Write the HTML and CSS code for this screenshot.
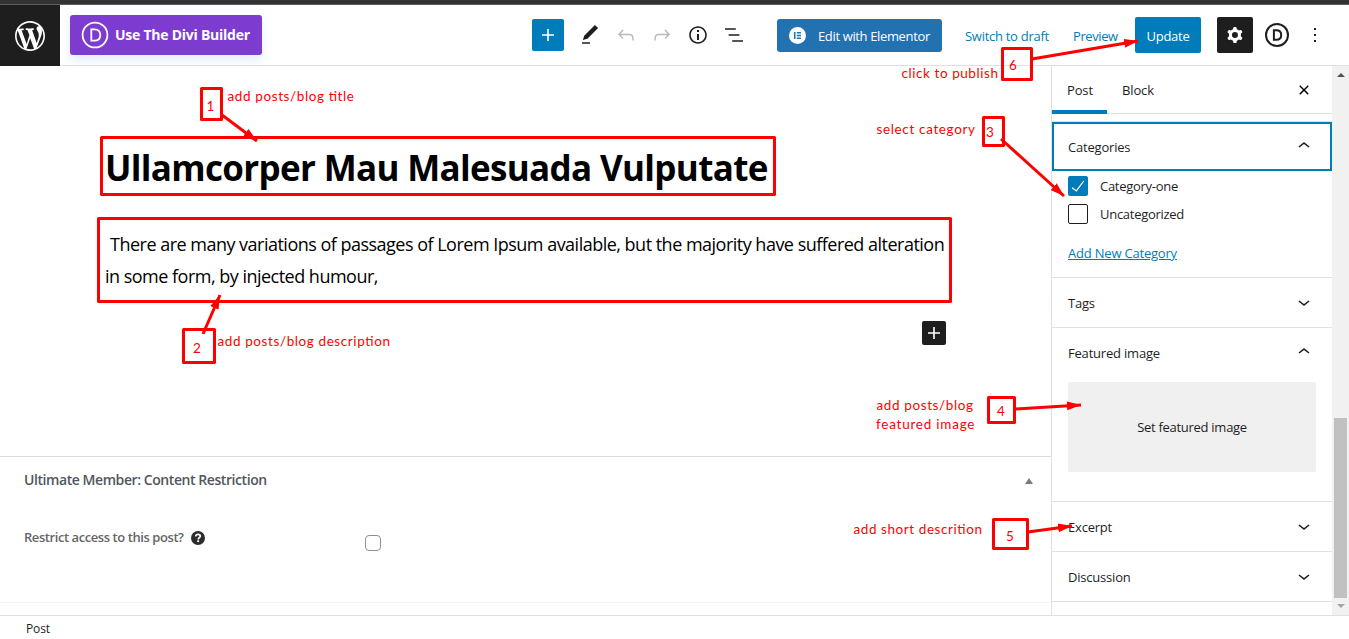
FILE: index.html
```html
<!DOCTYPE html>
<html lang="en">
<head>
<meta charset="utf-8">
<title>Edit Post</title>
<link rel="stylesheet" href="styles.css">
</head>
<body>
<div class="editor">
  <div class="admin-strip"></div>
  <header class="header">
    <a class="wp-logo"><svg width="36" height="36" viewBox="-2 -2 24 24"><path d="M20 10c0-5.51-4.49-10-10-10C4.48 0 0 4.49 0 10c0 5.52 4.48 10 10 10 5.51 0 10-4.48 10-10zM7.78 15.37L4.37 6.22c.55-.02 1.17-.08 1.17-.08.5-.06.44-1.13-.06-1.11 0 0-1.45.11-2.37.11-.18 0-.37 0-.58-.01C4.12 2.69 6.87 1.11 10 1.11c2.33 0 4.45.87 6.05 2.34-.68-.11-1.65.39-1.65 1.58 0 .74.45 1.36.9 2.1.35.61.55 1.36.55 2.46 0 1.49-1.4 5-1.4 5l-3.03-8.37c.54-.02.82-.17.82-.17.5-.05.44-1.25-.06-1.22 0 0-1.44.12-2.38.12-.87 0-2.33-.12-2.33-.12-.5-.03-.56 1.2-.06 1.22l.92.08 1.26 3.41zM17.41 10c.24-.64.74-1.87.43-4.25.7 1.29 1.05 2.71 1.05 4.25 0 3.29-1.73 6.24-4.4 7.78.97-2.59 1.94-5.2 2.92-7.78zM6.1 18.09C3.12 16.65 1.11 13.53 1.11 10c0-1.3.23-2.48.72-3.59C3.25 10.3 4.67 14.2 6.1 18.09zm4.03-6.63l2.58 6.98c-.86.29-1.76.45-2.71.45-.79 0-1.57-.11-2.29-.33.81-2.38 1.62-4.74 2.42-7.1z"/></svg></a>
    <button class="divi-button">
      <svg width="28" height="28" viewBox="0 0 28 28"><circle cx="14" cy="14" r="12.4"/><path d="M10.3 8.3h3.2c3.6 0 5.8 2.1 5.8 5.7s-2.2 5.7-5.8 5.7h-3.2z"/></svg>
      <span>Use The Divi Builder</span>
    </button>
    <div class="tools">
      <button class="inserter"><svg width="24" height="24" viewBox="0 0 24 24"><path d="M18 11.2h-5.2V6h-1.6v5.2H6v1.6h5.2V18h1.6v-5.2H18z"/></svg></button>
      <button class="tool"><svg width="24" height="24" viewBox="0 0 24 24"><path d="M20.1 5.1L16.9 2 6.2 12.7l-1.3 4.4 4.5-1.3L20.1 5.1zM4 20.8h8v-1.5H4v1.5z"/></svg></button>
      <button class="tool disabled"><svg width="24" height="24" viewBox="0 0 24 24"><path d="M18.3 11.7c-.6-.6-1.4-.9-2.3-.9H6.7l2.9-3.3-1.1-1-4.5 5L8.5 16l1-1-2.7-2.7H16c.5 0 .9.2 1.3.5 1 1 1 3.4 1 4.5v.3h1.5v-.2c0-1.5 0-4.3-1.5-5.7z"/></svg></button>
      <button class="tool disabled"><svg width="24" height="24" viewBox="0 0 24 24"><path d="M15.6 6.5l-1.1 1 2.9 3.3H8c-.9 0-1.7.3-2.3.9-1.4 1.5-1.4 4.2-1.4 5.6v.2h1.5v-.3c0-1.1 0-3.5 1-4.5.3-.3.7-.5 1.3-.5h9.2L14.5 15l1.1 1.1 4.6-4.6-4.6-5z"/></svg></button>
      <button class="tool"><svg width="24" height="24" viewBox="0 0 24 24"><path d="M12 3.2c-4.8 0-8.8 3.9-8.8 8.8 0 4.8 3.9 8.8 8.8 8.8 4.8 0 8.8-3.9 8.8-8.8 0-4.8-4-8.8-8.8-8.8zm0 16c-4 0-7.2-3.3-7.2-7.2C4.8 8 8 4.8 12 4.8s7.2 3.3 7.2 7.2c0 4-3.2 7.2-7.2 7.2zM11 17h2v-6h-2v6zm0-8h2V7h-2v2z"/></svg></button>
      <button class="tool"><svg width="24" height="24" viewBox="0 0 24 24"><path d="M13.8 5.2H3v1.5h10.8V5.2zm-3.6 12v1.5H21v-1.5H10.2zm7.2-6H6.6v1.5h10.8v-1.5z"/></svg></button>
    </div>
    <button class="elementor-button">
      <svg width="17" height="17" viewBox="0 0 17 17"><circle cx="8.500" cy="8.500" r="8.500" fill="#fff"/><path d="M5 5h1.500v7H5zM7.800 5H12v1.400H7.800zM7.800 7.800H12v1.400H7.800zM7.800 10.600H12V12H7.800z" fill="#2271b1"/></svg>
      <span>Edit with Elementor</span>
    </button>
    <div class="actions">
      <a class="link draft">Switch to draft</a>
      <a class="link preview">Preview</a>
      <button class="update">Update</button>
      <button class="settings"><svg width="24" height="24" viewBox="0 0 24 24"><path fill-rule="evenodd" d="M10.289 4.836A1 1 0 0 1 11.275 4h1.306a1 1 0 0 1 .987.836l.244 1.466c.787.26 1.503.679 2.108 1.218l1.393-.522a1 1 0 0 1 1.216.437l.653 1.130a1 1 0 0 1-.23 1.273l-1.148.944a6.025 6.025 0 0 1 0 2.435l1.149.946a1 1 0 0 1 .23 1.272l-.653 1.130a1 1 0 0 1-1.216.437l-1.394-.522c-.605.54-1.320.958-2.108 1.218l-.244 1.466a1 1 0 0 1-.987.836h-1.306a1 1 0 0 1-.986-.836l-.244-1.466a5.995 5.995 0 0 1-2.108-1.218l-1.394.522a1 1 0 0 1-1.217-.436l-.653-1.131a1 1 0 0 1 .23-1.272l1.149-.946a6.026 6.026 0 0 1 0-2.435l-1.148-.944a1 1 0 0 1-.23-1.272l.653-1.131a1 1 0 0 1 1.217-.437l1.393.522a5.994 5.994 0 0 1 2.108-1.218l.244-1.466zM14.929 12a3 3 0 1 1-6 0 3 3 0 0 1 6 0z"/></svg></button>
      <button class="divi-round"><svg width="24" height="24" viewBox="0 0 24 24"><circle cx="12" cy="12" r="11"/><path d="M8.900 7.200h2.500c3 0 4.800 1.800 4.800 4.800s-1.800 4.800-4.800 4.800H8.900z"/></svg></button>
      <button class="more"><svg width="24" height="24" viewBox="0 0 24 24"><path d="M13 19h-2v-2h2v2zm0-6h-2v-2h2v2zm0-6h-2V5h2v2z"/></svg></button>
    </div>
  </header>
  <div class="body">
    <main class="content">
      <section class="canvas">
        <h1 class="post-title">Ullamcorper Mau Malesuada Vulputate</h1>
        <p class="post-text"><span class="line first">There are many variations of passages of Lorem Ipsum available, but the majority have suffered alteration</span><span class="line">in some form, by injected humour,</span></p>
        <button class="appender"><svg width="24" height="24" viewBox="0 0 24 24"><path d="M18 11.2h-5.2V6h-1.6v5.2H6v1.6h5.2V18h1.6v-5.2H18z"/></svg></button>
      </section>
      <section class="metabox">
        <div class="metabox-head"><h2>Ultimate Member: Content Restriction</h2><span class="toggle"></span></div>
        <div class="metabox-row">
          <label>Restrict access to this post?</label>
          <svg class="help" width="14" height="14" viewBox="0 0 14 14"><circle cx="7" cy="7" r="7" fill="#2c2c2c"/><path d="M4.700 5.500C4.700 4 5.700 3.300 7 3.300s2.300.7 2.300 1.900C9.300 6.600 7.200 6.800 7.200 8.500" fill="none" stroke="#fff" stroke-width="1.700"/><path d="M6.200 9.300h1.900v1.800H6.200z" fill="#fff"/></svg>
          <span class="restrict-box"></span>
        </div>
      </section>
    </main>
    <aside class="sidebar">
      <div class="panels">
        <nav class="tabs"><span class="tab active">Post</span><span class="tab">Block</span><svg class="close" width="24" height="24" viewBox="0 0 24 24"><path d="M12 13.060l3.712 3.713 1.061-1.060L13.061 12l3.712-3.712-1.060-1.060L12 10.938 8.288 7.227l-1.061 1.060L10.939 12l-3.712 3.712 1.060 1.061L12 13.061z"/></svg></nav>
        <div class="panel categories">
          <div class="panel-head focused"><span>Categories</span><svg class="chev" width="24" height="24" viewBox="0 0 24 24"><path d="M6.500 12.400L12 8l5.500 4.400-.9 1.200L12 10l-4.500 3.600-1-1.200z"/></svg></div>
          <div class="check"><span class="box checked"><svg width="20" height="20" viewBox="0 0 24 24"><path d="M18.300 5.600L9.900 16.900l-4.600-3.400-.9 1.200 5.800 4.300 9.300-12.600z"/></svg></span><span>Category-one</span></div>
          <div class="check"><span class="box"></span><span>Uncategorized</span></div>
          <a class="add-new">Add New Category</a>
        </div>
        <div class="panel"><div class="panel-head"><span>Tags</span><svg class="chev" width="24" height="24" viewBox="0 0 24 24"><path d="M17.500 11.600L12 16l-5.500-4.400.9-1.200L12 14l4.500-3.600 1 1.200z"/></svg></div></div>
        <div class="panel featured"><div class="panel-head"><span>Featured image</span><svg class="chev" width="24" height="24" viewBox="0 0 24 24"><path d="M6.500 12.400L12 8l5.500 4.400-.9 1.200L12 10l-4.500 3.600-1-1.200z"/></svg></div>
          <button class="set-image">Set featured image</button></div>
        <div class="panel"><div class="panel-head"><span>Excerpt</span><svg class="chev" width="24" height="24" viewBox="0 0 24 24"><path d="M17.500 11.600L12 16l-5.500-4.400.9-1.200L12 14l4.500-3.600 1 1.200z"/></svg></div></div>
        <div class="panel"><div class="panel-head"><span>Discussion</span><svg class="chev" width="24" height="24" viewBox="0 0 24 24"><path d="M17.500 11.600L12 16l-5.500-4.400.9-1.200L12 14l4.500-3.600 1 1.200z"/></svg></div></div>
      </div>
      <div class="scrollbar"><span class="arrow-up"></span><span class="thumb"></span><span class="arrow-down"></span></div>
    </aside>
  </div>
  <footer class="footer">Post</footer>
</div>

<svg class="annotations" width="1349" height="639" viewBox="0 0 1349 639">
  <defs>
    <marker id="head" markerUnits="userSpaceOnUse" markerWidth="15" markerHeight="10" refX="14" refY="4.500" orient="auto"><path d="M0 0L14 4.500L0 9z" fill="#f00"/></marker>
  </defs>
  <g class="frames">
    <rect x="201.500" y="88.500" width="20" height="31"/>
    <rect x="101.500" y="137.500" width="673" height="57"/>
    <rect x="98.500" y="218.500" width="852" height="83"/>
    <rect x="183.500" y="329.500" width="31" height="33"/>
    <rect x="983.500" y="117.500" width="20" height="28"/>
    <rect x="1002.500" y="48.500" width="29" height="31"/>
    <rect x="988.500" y="397.500" width="26" height="25"/>
    <rect x="993.500" y="519.500" width="34" height="29"/>
  </g>
  <g class="arrows">
    <path d="M222 115L257 141"/>
    <path d="M203 334L220 295"/>
    <path d="M1001 139L1064 196"/>
    <path d="M1032 59L1138 41"/>
    <path d="M1015 409L1081 405"/>
    <path d="M1028 532L1072 526"/>
  </g>
  <g class="notes">
    <text x="227.500" y="101" textLength="126.500">add posts/blog title</text>
    <text x="217.500" y="346" textLength="172.500">add posts/blog description</text>
    <text x="876.500" y="134" textLength="98.500">select category</text>
    <text x="901.500" y="78" textLength="96.500">click to publish</text>
    <text x="876.500" y="410" textLength="96.500">add posts/blog</text>
    <text x="876" y="429" textLength="98.500">featured image</text>
    <text x="853.500" y="534" textLength="128.500">add short descrition</text>
    <text x="206.500" y="111">1</text>
    <text x="193" y="353">2</text>
    <text x="986" y="137">3</text>
    <text x="997" y="416">4</text>
    <text x="1006" y="541">5</text>
    <text x="1009" y="70">6</text>
  </g>
</svg>
</body>
</html>
```
FILE: styles.css
```css
* { box-sizing: border-box; }
body {
  margin: 0;
  width: 1349px;
  height: 639px;
  overflow: hidden;
  position: relative;
  background: #fff;
  color: #1e1e1e;
  font: 13px/18px "Open Sans", "Noto Sans", sans-serif;
  letter-spacing: -0.28px;
}
button { border: 0; padding: 0; margin: 0; background: none; font: inherit; letter-spacing: inherit; color: inherit; }
svg { display: block; flex: none; }
.editor { display: flex; flex-direction: column; height: 639px; }
.admin-strip { height: 5px; background: #333; border-bottom: 1px solid #5c5c5c; }

.header { display: flex; align-items: center; height: 61px; border-bottom: 1px solid #e0e0e0; white-space: nowrap; }
.wp-logo { width: 60px; height: 61px; margin-bottom: -1px; background: #1e1e1e; fill: #fff; display: flex; align-items: center; justify-content: center; }
.divi-button { width: 192px; height: 40px; margin-left: 10px; padding-left: 11px; display: flex; align-items: center; gap: 6px; background: #7e3bd0; border-radius: 3px; color: #fff; font-weight: 700; font-size: 14px; box-shadow: 0 5px 10px rgba(43, 135, 218, .14); letter-spacing: -0.25px; }
.divi-button svg { fill: none; stroke: #fff; stroke-width: 1.8; }
.tools { display: flex; align-items: center; margin-left: 270px; }
.inserter { width: 32px; height: 32px; padding: 4px; margin-right: 8px; background: #007cba; border-radius: 2px; fill: #fff; }
.tool { width: 36px; height: 36px; padding: 6px; fill: #1e1e1e; }
.disabled { opacity: .3; }
.elementor-button { width: 165px; height: 33px; margin-left: 25px; padding-left: 12px; display: flex; align-items: center; gap: 12px; background: #2271b1; border-radius: 3px; color: #fff; font-weight: 500; letter-spacing: -0.36px; }
.elementor-button span { padding-top: 2px; }
.actions { display: flex; align-items: center; }
.link { color: #007cba; padding-top: 2px; }
.draft { width: 84px; margin-left: 23px; }
.preview { width: 44px; margin-left: 24px; letter-spacing: -0.4px; }
.update { width: 66px; height: 36px; margin-left: 18px; padding-top: 2px; background: #007cba; color: #fff; border-radius: 2px; font-weight: 500; }
.settings { width: 36px; height: 36px; margin-left: 16px; padding: 6px; background: #1e1e1e; border-radius: 2px; fill: #fff; }
.divi-round { margin-left: 12px; }
.divi-round svg { fill: none; stroke: #1e1e1e; stroke-width: 2; }
.more { margin-left: 14px; fill: #1e1e1e; }

.body { display: flex; height: 549px; }
.content { width: 1051px; }
.canvas { height: 390px; padding: 78px 105px 0 105px; }
.post-title { margin: 0; font-size: 35px; line-height: 48px; font-weight: 700; color: #000; white-space: nowrap; letter-spacing: -0.67px; }
.post-text { margin: 36px 0 0; font-size: 18px; line-height: 32px; color: #000; white-space: nowrap; letter-spacing: -0.51px; }
.line { display: block; }
.first { padding-left: 5px; }
.appender { display: block; width: 24px; height: 24px; margin: 29px 0 0 auto; background: #1e1e1e; border-radius: 2px; fill: #fff; }
.metabox { height: 147px; border-top: 1px solid #dcdcdc; border-bottom: 1px solid #f3f3f3; }
.metabox-head { display: flex; align-items: center; justify-content: space-between; height: 45px; padding: 0 18px 0 24px; }
.metabox h2 { margin: 0; font-size: 14px; font-weight: 600; color: #50575e; letter-spacing: -0.43px; }
.toggle { width: 0; height: 0; border: 4px solid transparent; border-top: 0; border-bottom: 6px solid #787c82; margin-top: 2px; }
.metabox-row { display: flex; align-items: flex-start; padding: 26px 0 0 24px; color: #666; font-weight: 600; }
.metabox-row label { width: 167px; white-space: nowrap; letter-spacing: -0.43px; }
.help { margin-top: 3px; }
.restrict-box { width: 16px; height: 16px; margin: 7px 0 0 160px; border: 1px solid #8c8f94; border-radius: 4px; }

.sidebar { display: flex; width: 298px; border-left: 1px solid #e0e0e0; overflow: hidden; }
.panels { width: 280px; }
.tabs { display: flex; height: 48px; border-bottom: 1px solid #e0e0e0; font-weight: 500; letter-spacing: -0.15px; }
.tab { height: 48px; padding: 15px 15px 0; }
.active { width: 55px; border-bottom: 4px solid #007cba; }
.close { margin: 12px 16px 0 auto; }
.panel { height: 50px; border-bottom: 1px solid #e0e0e0; }
.panel-head { display: flex; align-items: center; justify-content: space-between; height: 49px; padding: 0 16px; font-weight: 500; letter-spacing: -0.2px; }
.chev { fill: #1e1e1e; margin-top: -2px; }
.categories { height: 157px; margin-top: 7px; border-top: 1px solid #e0e0e0; }
.focused { border: 2px solid #007cba; padding: 0 14px; }
.check { display: flex; align-items: center; gap: 12px; height: 20px; margin: 5px 0 8px 16px; }
.check + .check { margin-top: 0; }
.box { width: 20px; height: 20px; border: 1px solid #1e1e1e; border-radius: 2px; }
.checked { border: 0; background: #007cba; fill: #fff; }
.add-new { display: block; margin: 20px 0 0 16px; color: #007cba; text-decoration: underline; letter-spacing: -0.2px; }
.featured { height: 174px; }
.set-image { display: block; width: 248px; height: 90px; margin: 5px 16px 0; background: #f0f0f0; border-radius: 2px; }
.scrollbar { display: flex; flex-direction: column; align-items: center; width: 17px; height: 549px; background: #f1f1f1; }
.arrow-up { margin-top: 7px; border: 4px solid transparent; border-top: 0; border-bottom-color: #505050; }
.thumb { width: 13px; height: 180px; margin-top: 341px; background: #c1c1c1; }
.arrow-down { margin-top: 6px; border: 4px solid transparent; border-bottom: 0; border-top-color: #a3a3a3; }
.footer { height: 24px; border-top: 1px solid #e0e0e0; padding: 4px 26px; font-size: 12px; letter-spacing: -0.15px; }

.annotations { position: absolute; left: 0; top: 0; }
.frames { fill: none; stroke: #f00; stroke-width: 3; stroke-linejoin: round; }
.arrows path { fill: none; stroke: #f00; stroke-width: 3; marker-end: url(#head); }
.notes { fill: #f00; font: 13.5px Lato, sans-serif; letter-spacing: 0; }
```
